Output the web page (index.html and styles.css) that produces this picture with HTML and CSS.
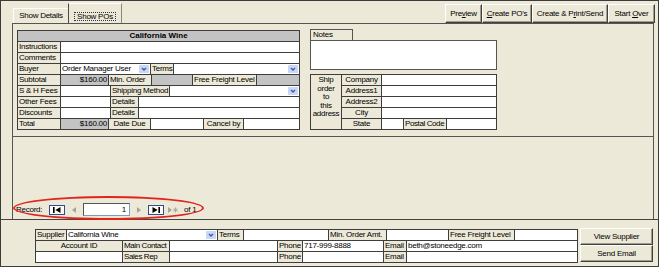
FILE: index.html
```html
<!DOCTYPE html>
<html lang="en">
<head>
  <meta charset="UTF-8" />
  <title>Create Purchase Orders</title>
  <link rel="stylesheet" href="styles.css">
</head>
<body>

  <div class="window">
    <!-- Tabs and action buttons -->
    <div class="topbar">
      <div class="tabs">
        <div class="tab">Show Details</div>
        <div class="tab active"><span class="focus">Show POs</span></div>
      </div>
      <div class="actions">
        <button class="btn btn-preview">Pre<u>v</u>iew</button>
        <button class="btn btn-create"><u>C</u>reate PO's</button>
        <button class="btn btn-print">Create &amp; P<u>r</u>int/Send</button>
        <button class="btn btn-start">Start <u>O</u>ver</button>
      </div>
    </div>

    <div class="tabpage">
      <div class="upper">
        <!-- Order details -->
        <div class="grid order">
          <div class="row r-head"><div class="cell g title">California Wine</div></div>
          <div class="row r-single"><div class="cell">Instructions</div><div class="cell w"></div></div>
          <div class="row r-single"><div class="cell">Comments</div><div class="cell w"></div></div>
          <div class="row r-buyer">
            <div class="cell">Buyer</div>
            <div class="cell w combo">Order Manager User<svg class="drop" viewBox="0 0 10 8"><rect width="10" height="8" rx="1" fill="#c9d7f7"/><path d="M3 3l2 2 2-2" stroke="#3f5aa0" stroke-width="1.4" fill="none"/></svg></div>
            <div class="cell">Terms</div>
            <div class="cell w combo"><span></span><svg class="drop" viewBox="0 0 10 8"><rect width="10" height="8" rx="1" fill="#c9d7f7"/><path d="M3 3l2 2 2-2" stroke="#3f5aa0" stroke-width="1.4" fill="none"/></svg></div>
          </div>
          <div class="row r-subtotal">
            <div class="cell">Subtotal</div>
            <div class="cell g num">$160.00</div>
            <div class="cell">Min. Order</div>
            <div class="cell g"></div>
            <div class="cell">Free Freight Level</div>
            <div class="cell g"></div>
          </div>
          <div class="row r-ship">
            <div class="cell">S &amp; H Fees</div>
            <div class="cell w"></div>
            <div class="cell">Shipping Method</div>
            <div class="cell w combo"><span></span><svg class="drop" viewBox="0 0 10 8"><rect width="10" height="8" rx="1" fill="#c9d7f7"/><path d="M3 3l2 2 2-2" stroke="#3f5aa0" stroke-width="1.4" fill="none"/></svg></div>
          </div>
          <div class="row r-detail">
            <div class="cell">Other Fees</div>
            <div class="cell w"></div>
            <div class="cell">Details</div>
            <div class="cell w"></div>
          </div>
          <div class="row r-detail">
            <div class="cell">Discounts</div>
            <div class="cell w"></div>
            <div class="cell">Details</div>
            <div class="cell w"></div>
          </div>
          <div class="row r-total">
            <div class="cell">Total</div>
            <div class="cell g num">$160.00</div>
            <div class="cell center">Date Due</div>
            <div class="cell w"></div>
            <div class="cell center">Cancel by</div>
            <div class="cell w"></div>
          </div>
        </div>

        <!-- Notes and ship-to address -->
        <div class="side">
          <div class="notes-tab">Notes</div>
          <div class="notes"></div>
          <div class="ship">
            <div class="cell ship-note">Ship<br>order<br>to<br>this<br>address</div>
            <div class="cell center">Company</div><div class="cell w"></div>
            <div class="cell center">Address1</div><div class="cell w"></div>
            <div class="cell center">Address2</div><div class="cell w"></div>
            <div class="cell center">City</div><div class="cell w"></div>
            <div class="cell center">State</div>
            <div class="split">
              <div class="cell w"></div>
              <div class="cell tight">Postal Code</div>
              <div class="cell w"></div>
            </div>
          </div>
        </div>
      </div>

      <div class="lower">
        <!-- Record navigator -->
        <div class="nav">
          <span class="nav-label">Record:</span>
          <span class="nav-btn boxed"><svg width="8" height="6" viewBox="0 0 8 6"><rect width="1.6" height="6"/><path d="M7.5 0L2.4 3l5.1 3z"/></svg></span>
          <span class="nav-btn small"><svg width="4" height="6" viewBox="0 0 4 6"><path d="M4 0L0 3l4 3z" fill="#a7a596"/></svg></span>
          <span class="nav-box">1</span>
          <span class="nav-btn small"><svg width="4" height="6" viewBox="0 0 4 6"><path d="M0 0l4 3-4 3z" fill="#a7a596"/></svg></span>
          <span class="nav-btn boxed"><svg width="8" height="6" viewBox="0 0 8 6"><path d="M0.5 0l5.1 3-5.1 3z"/><rect x="6.4" width="1.6" height="6"/></svg></span>
          <span class="nav-btn new"><svg width="10" height="6" viewBox="0 0 10 6"><path d="M0 0l4 3-4 3z" fill="#a7a596"/><path d="M7.5 0.5v5M5.3 1.7l4.4 2.6M5.3 4.3l4.4-2.6" stroke="#a7a596" stroke-width="0.9"/></svg></span>
          <span class="nav-of">of 1</span>
        </div>
        <div class="ellipse"></div>
      </div>
    </div>

    <!-- Supplier footer -->
    <div class="footer">
      <div class="grid supplier">
        <div class="row r-sup1">
          <div class="cell">Supplier</div>
          <div class="cell w combo">California Wine<svg class="drop" viewBox="0 0 10 8"><rect width="10" height="8" rx="1" fill="#c9d7f7"/><path d="M3 3l2 2 2-2" stroke="#3f5aa0" stroke-width="1.4" fill="none"/></svg></div>
          <div class="cell">Terms</div>
          <div class="cell w"></div>
          <div class="cell">Min. Order Amt.</div>
          <div class="cell w"></div>
          <div class="cell">Free Freight Level</div>
          <div class="cell w"></div>
        </div>
        <div class="row r-sup2">
          <div class="cell center">Account ID</div>
          <div class="cell tight">Main Contact</div>
          <div class="cell w"></div>
          <div class="cell">Phone</div>
          <div class="cell w">717-999-8888</div>
          <div class="cell">Email</div>
          <div class="cell w">beth@stoneedge.com</div>
        </div>
        <div class="row r-sup2">
          <div class="cell w"></div>
          <div class="cell tight">Sales Rep</div>
          <div class="cell w"></div>
          <div class="cell">Phone</div>
          <div class="cell w"></div>
          <div class="cell">Email</div>
          <div class="cell w"></div>
        </div>
      </div>
      <div class="footer-btns">
        <button class="btn fbtn">View Supplier</button>
        <button class="btn fbtn">Send Email</button>
      </div>
    </div>
  </div>

</body>
</html>
```

FILE: styles.css
```css
* {
  margin: 0;
  padding: 0;
  box-sizing: border-box;
}

body {
  width: 659px;
  height: 267px;
  overflow: hidden;
  background: #ECE9D8;
  color: #000;
  font-family: "Liberation Sans", Arial, sans-serif;
  font-size: 8px;
  letter-spacing: -0.25px;
}

.window {
  width: 659px;
  height: 267px;
  border: 1px solid #3c3c3c;
  display: flex;
  flex-direction: column;
}

/* top bar */
.topbar {
  height: 22px;
  flex-shrink: 0;
  display: flex;
  justify-content: space-between;
  align-items: flex-end;
}

.tabs {
  display: flex;
  align-items: flex-end;
  margin-left: 12px;
}

.tab {
  width: 55px;
  height: 15px;
  border-top: 1px solid #fff;
  border-left: 1px solid #fff;
  line-height: 13px;
  text-align: center;
}

.tab.active {
  width: 54px;
  height: 20px;
  padding-top: 8px;
  line-height: 8px;
  border-left: 1px solid #4a4a4a;
  border-right: 1px solid #8a887a;
}

.focus {
  display: inline-block;
  padding: 0 2px;
  height: 9px;
  border: 1px dotted #333;
}

.actions {
  display: flex;
  margin-right: 3px;
}

.btn {
  height: 19px;
  padding: 0;
  font: inherit;
  letter-spacing: inherit;
  color: #000;
  background: #ECE9D8;
  border: none;
  border-top: 1px solid #fff;
  border-left: 1px solid #fff;
  border-right: 1px solid #404040;
  border-bottom: 1px solid #404040;
  box-shadow: inset -1px -1px #a09d8c;
  cursor: pointer;
}

.btn-preview { width: 37px; }
.btn-create { width: 50px; }
.btn-print { width: 76px; }
.btn-start { width: 47px; }

/* tab page */
.tabpage {
  margin-left: 11px;
  width: 642px;
  height: 196px;
  flex-shrink: 0;
  border: 1px solid #555;
  border-bottom: none;
}

.upper {
  height: 113px;
  display: flex;
  align-items: flex-start;
  padding: 5px 0 0 4px;
  border-bottom: 1px solid #555;
}

/* grid tables: dark background shows through 1px gaps as lines */
.grid {
  background: #3d3d3d;
  padding: 1px;
  display: flex;
  flex-direction: column;
  gap: 1px;
}

.row {
  display: grid;
  gap: 1px;
  height: 10px;
}

.cell {
  background: #ECE9D8;
  padding: 0 1px;
  line-height: 10px;
  white-space: nowrap;
  overflow: hidden;
}

.cell.w { background: #fff; }
.cell.g { background: #c3c3c3; }
.cell.num { text-align: right; }
.cell.center { text-align: center; }

.cell.tight {
  padding: 0 0 0 1px;
  letter-spacing: -0.4px;
}

.title {
  text-align: center;
  font-weight: bold;
  letter-spacing: 0;
}

.combo {
  display: flex;
  justify-content: space-between;
  align-items: center;
}

.drop {
  width: 10px;
  height: 8px;
  flex-shrink: 0;
}

.order {
  width: 283px;
  margin-top: 1px;
}

.r-head { grid-template-columns: 1fr; }
.r-single { grid-template-columns: 42px 1fr; }
.r-buyer { grid-template-columns: 42px 89px 22px 1fr; }
.r-subtotal { grid-template-columns: 42px 47px 42px 40px 63px 1fr; }
.r-ship { grid-template-columns: 42px 49px 58px 1fr; }
.r-detail { grid-template-columns: 42px 49px 27px 1fr; }
.r-total { grid-template-columns: 42px 47px 41px 52px 39px 1fr; }

/* notes + ship to */
.side {
  width: 187px;
  margin-left: 10px;
}

.notes-tab {
  width: 43px;
  height: 11px;
  padding-left: 2px;
  line-height: 10px;
  border: 1px solid #555;
  border-bottom: none;
}

.notes {
  height: 30px;
  background: #fff;
  border: 1px solid #555;
}

.ship {
  margin-top: 4px;
  display: grid;
  grid-template-columns: 30px 39px 1fr;
  grid-template-rows: repeat(5, 10px);
  gap: 1px;
  padding: 1px;
  background: #3d3d3d;
}

.ship-note {
  grid-row: span 5;
  padding: 1px 0 0;
  text-align: center;
  line-height: 8.6px;
}

.split {
  display: grid;
  grid-template-columns: 21px 42px 1fr;
  gap: 1px;
}

/* record navigator */
.lower {
  height: 82px;
  position: relative;
  display: flex;
  align-items: flex-end;
  padding: 0 0 3px 3px;
}

.nav {
  display: flex;
  align-items: center;
  height: 13px;
}

.nav-label {
  width: 30px;
}

.nav-btn {
  display: flex;
  align-items: center;
  justify-content: center;
  height: 10px;
}

.nav-btn.boxed {
  width: 16px;
  margin-left: 3px;
  background: #fbfbf8;
  border: 1px solid #2d4b8e;
}

.nav-btn.small {
  width: 12px;
  margin-left: 3px;
}

.nav-btn.new {
  width: 16px;
  margin-left: 1px;
}

.nav-box {
  width: 47px;
  height: 13px;
  margin-left: 3px;
  padding-right: 3px;
  text-align: right;
  line-height: 11px;
  background: #fff;
  border: 1px solid #7f9db9;
  border-top-color: #555;
  border-left-color: #555;
}

.nav-of {
  margin-left: 3px;
}

.ellipse {
  position: absolute;
  left: 0;
  top: 59px;
  width: 191px;
  height: 24px;
  border: 2px solid #e3241d;
  border-radius: 50%;
}

/* footer */
.footer {
  flex: 1;
  display: flex;
  align-items: flex-start;
  padding: 9px 0 0 34px;
  border-top: 1px solid #444;
}

.supplier {
  width: 543px;
}

.r-sup1 { grid-template-columns: 30px 150px 25px 84px 57px 61px 65px 1fr; }
.r-sup2 { grid-template-columns: 86px 46px 107px 24px 80px 22px 1fr; }

.footer-btns {
  width: 73px;
  margin: -1px 0 0 2px;
  display: flex;
  flex-direction: column;
}

.fbtn {
  height: 17px;
}
```
